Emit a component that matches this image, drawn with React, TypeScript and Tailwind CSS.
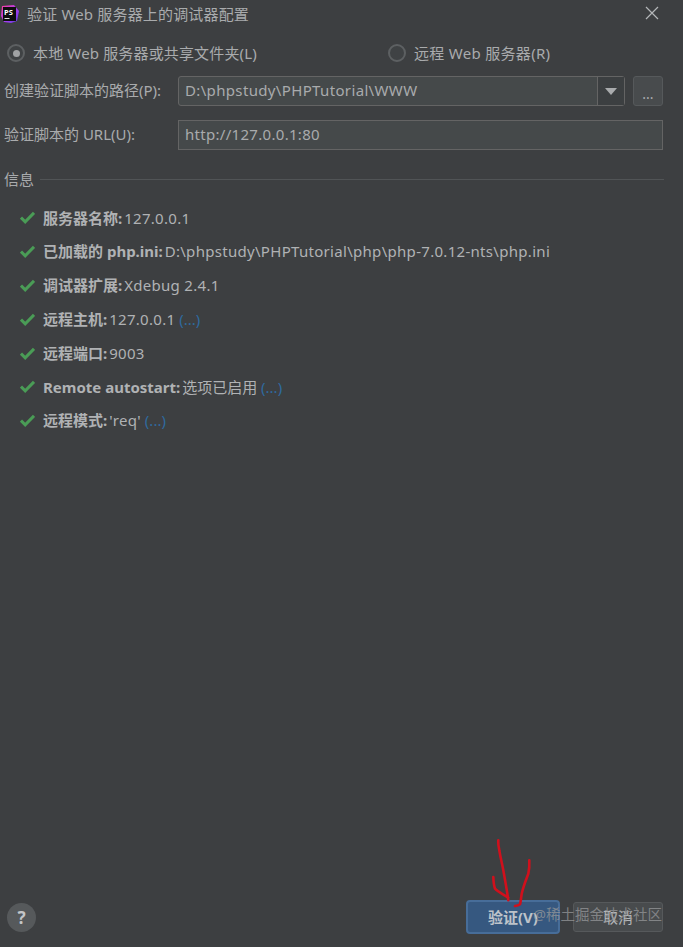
const FONT = "font-['Noto_Sans','Noto_Sans_CJK_SC',sans-serif]";

function Check() {
  return (
    <svg width="15" height="13" viewBox="0 0 15 13" className="shrink-0">
      <path d="M1 6.6 L5.2 10.8 L14 1.8" fill="none" stroke="#4a9c56" strokeWidth="3" />
    </svg>
  );
}

function Row({ bold, value, link, latin = true }: { bold: string; value: string; link?: boolean; latin?: boolean }) {
  return (
    <div className="flex h-[33.8px] items-center gap-[8px] pl-[20px] text-[15px] text-[#b0b2b4]">
      <Check />
      <div className="whitespace-pre">
        <span className="font-bold">{bold}</span>
        <span className="-ml-[2px]"> </span>
        <span className={latin ? "tracking-[0.3px]" : ""}>{value}</span>
        {link && <span className="text-[#2f6a9e]"> (...)</span>}
      </div>
    </div>
  );
}

function Radio({ on }: { on?: boolean }) {
  return (
    <div className="flex h-[18px] w-[18px] shrink-0 items-center justify-center rounded-full border-2 border-[#5d6062] bg-[#3f4244]">
      {on && <div className="h-[7px] w-[7px] rounded-full bg-[#a0a2a4]" />}
    </div>
  );
}

export default function App() {
  return (
    <div className={`${FONT} relative flex h-[947px] w-[683px] flex-col overflow-hidden bg-[#3d3f41] text-[#a9abad]`}>
      <div className="flex h-[28px] shrink-0 items-center pl-[1px] pr-[24px]">
        <svg width="18" height="18" viewBox="0 0 18 18" className="shrink-0">
          <defs>
            <linearGradient id="ps" x1="0" y1="0" x2="1" y2="1">
              <stop offset="0" stopColor="#ff3f9f" />
              <stop offset="0.55" stopColor="#a83cf0" />
              <stop offset="1" stopColor="#5a3ae0" />
            </linearGradient>
          </defs>
          <path d="M1 1 L13 0 L18 6 L16 16 L10 18 L3 17 L0 11 Z" fill="url(#ps)" />
          <rect x="2" y="2" width="13" height="14" fill="#0d0d0f" />
          <rect x="3.5" y="13" width="5" height="1" fill="#ddd" />
          <text x="3" y="9.5" fontSize="7.5" fontWeight="700" fill="#fff">PS</text>
        </svg>
        <div className="ml-[8px] text-[15px] tracking-[0.17px] text-[#a9abad]">验证 Web 服务器上的调试器配置</div>
        <svg width="14" height="14" viewBox="0 0 14 14" className="mb-[2px] ml-auto shrink-0">
          <path d="M1 1 L13 13 M13 1 L1 13" stroke="#b4b6b8" strokeWidth="1.2" />
        </svg>
      </div>

      <div className="mt-[15px] flex h-[20px] shrink-0 items-center text-[15px]">
        <div className="ml-[7px] flex w-[381px] shrink-0 items-center gap-[8px]">
          <Radio on />
          <span className="tracking-[0.15px]">本地 Web 服务器或共享文件夹(L)</span>
        </div>
        <div className="flex items-center gap-[8px]">
          <Radio />
          <span className="tracking-[0.3px]">远程 Web 服务器(R)</span>
        </div>
      </div>

      <div className="mt-[13px] flex h-[30px] shrink-0 items-center pl-[4px] pr-[20px] text-[15px]">
        <div className="mb-[2px] w-[174px] shrink-0">创建验证脚本的路径(P):</div>
        <div className="flex h-full w-[447px] shrink-0 rounded-[3px] border border-[#646464] bg-[#45494a]">
          <div className="flex flex-1 items-center pb-[2px] pl-[6px] tracking-[0.35px] text-[#a9abad]">D:\phpstudy\PHPTutorial\WWW</div>
          <div className="flex w-[27px] items-center justify-center border-l border-[#646464] bg-[#3c3f41]">
            <svg width="12" height="7" viewBox="0 0 12 7"><path d="M0 0 H12 L6 7 Z" fill="#a9abad" /></svg>
          </div>
        </div>
        <div className="ml-[8px] flex h-full flex-1 items-end justify-center rounded-[3px] border border-[#56595b] bg-[#484b4d] pb-[4px] leading-none">
          <span className="text-[14px]">...</span>
        </div>
      </div>

      <div className="mt-[14px] flex h-[30px] shrink-0 items-center pl-[4px] pr-[20px] text-[15px]">
        <div className="mb-[2px] w-[174px] shrink-0">验证脚本的 URL(U):</div>
        <div className="flex h-full flex-1 items-center border border-[#646464] bg-[#45494a] pb-[2px] pl-[6px] tracking-[0.3px] text-[#a9abad]">http://127.0.0.1:80</div>
      </div>

      <div className="mt-[19px] flex h-[20px] shrink-0 items-center gap-[6px] pl-[4px] pr-[19px] text-[15px]">
        <span>信息</span>
        <div className="h-px flex-1 bg-[#515456]" />
      </div>

      <div className="mt-[12px] flex shrink-0 flex-col">
        <Row bold="服务器名称:" value="127.0.0.1" />
        <Row bold="已加载的 php.ini:" value="D:\phpstudy\PHPTutorial\php\php-7.0.12-nts\php.ini" />
        <Row bold="调试器扩展:" value="Xdebug 2.4.1" />
        <Row bold="远程主机:" value="127.0.0.1" link />
        <Row bold="远程端口:" value="9003" />
        <Row bold="Remote autostart:" value="选项已启用" latin={false} link />
        <Row bold="远程模式:" value="'req'" link />
      </div>

      <div className="mt-auto mb-[13px] flex shrink-0 items-center pl-[7px] pr-[20px]">
        <div className="flex h-[29px] w-[29px] items-center justify-center rounded-full bg-[#56595b] text-[17px] font-bold leading-none text-[#c4c6c8]">?</div>
        <div className="ml-auto flex h-[34px] w-[94px] items-center justify-center rounded-[4px] border-2 border-[#476d99] bg-[#365880] text-[15px] font-bold text-[#bdc3ca]">验证(V)</div>
        <div className="ml-[13px] flex h-[30px] w-[90px] items-center justify-center rounded-[3px] border border-[#56595b] bg-[#484b4d] text-[15px] text-[#b4b6b8]">取消</div>
      </div>

      <div className="absolute left-[533px] top-[904px] whitespace-nowrap text-[14.5px] text-[#96989a]/75">@稀土掘金技术社区</div>

      <svg className="absolute left-[485px] top-[832px]" width="55" height="82" viewBox="0 0 55 82" fill="none">
        <path d="M13.3 8.3 C13 13 14 16 14.3 18.3 C15.5 26 17 31 18.3 38.3 C20 48 22 58 23.3 68.3 M8.3 45 C8.5 50 9 54 10 56.7 C13 60 18 62 23.3 65.7" stroke="#d0101c" strokeWidth="2.6" strokeLinecap="round" />
        <path d="M44.3 28.3 C44.5 33 44.5 37 43.3 41.7 C41 48 38.5 54 36.7 61.7 C36 66 36 69 35 72.3 C33.5 73.5 32 73.8 30 74" stroke="#d0101c" strokeWidth="2.6" strokeLinecap="round" />
      </svg>
    </div>
  );
}
